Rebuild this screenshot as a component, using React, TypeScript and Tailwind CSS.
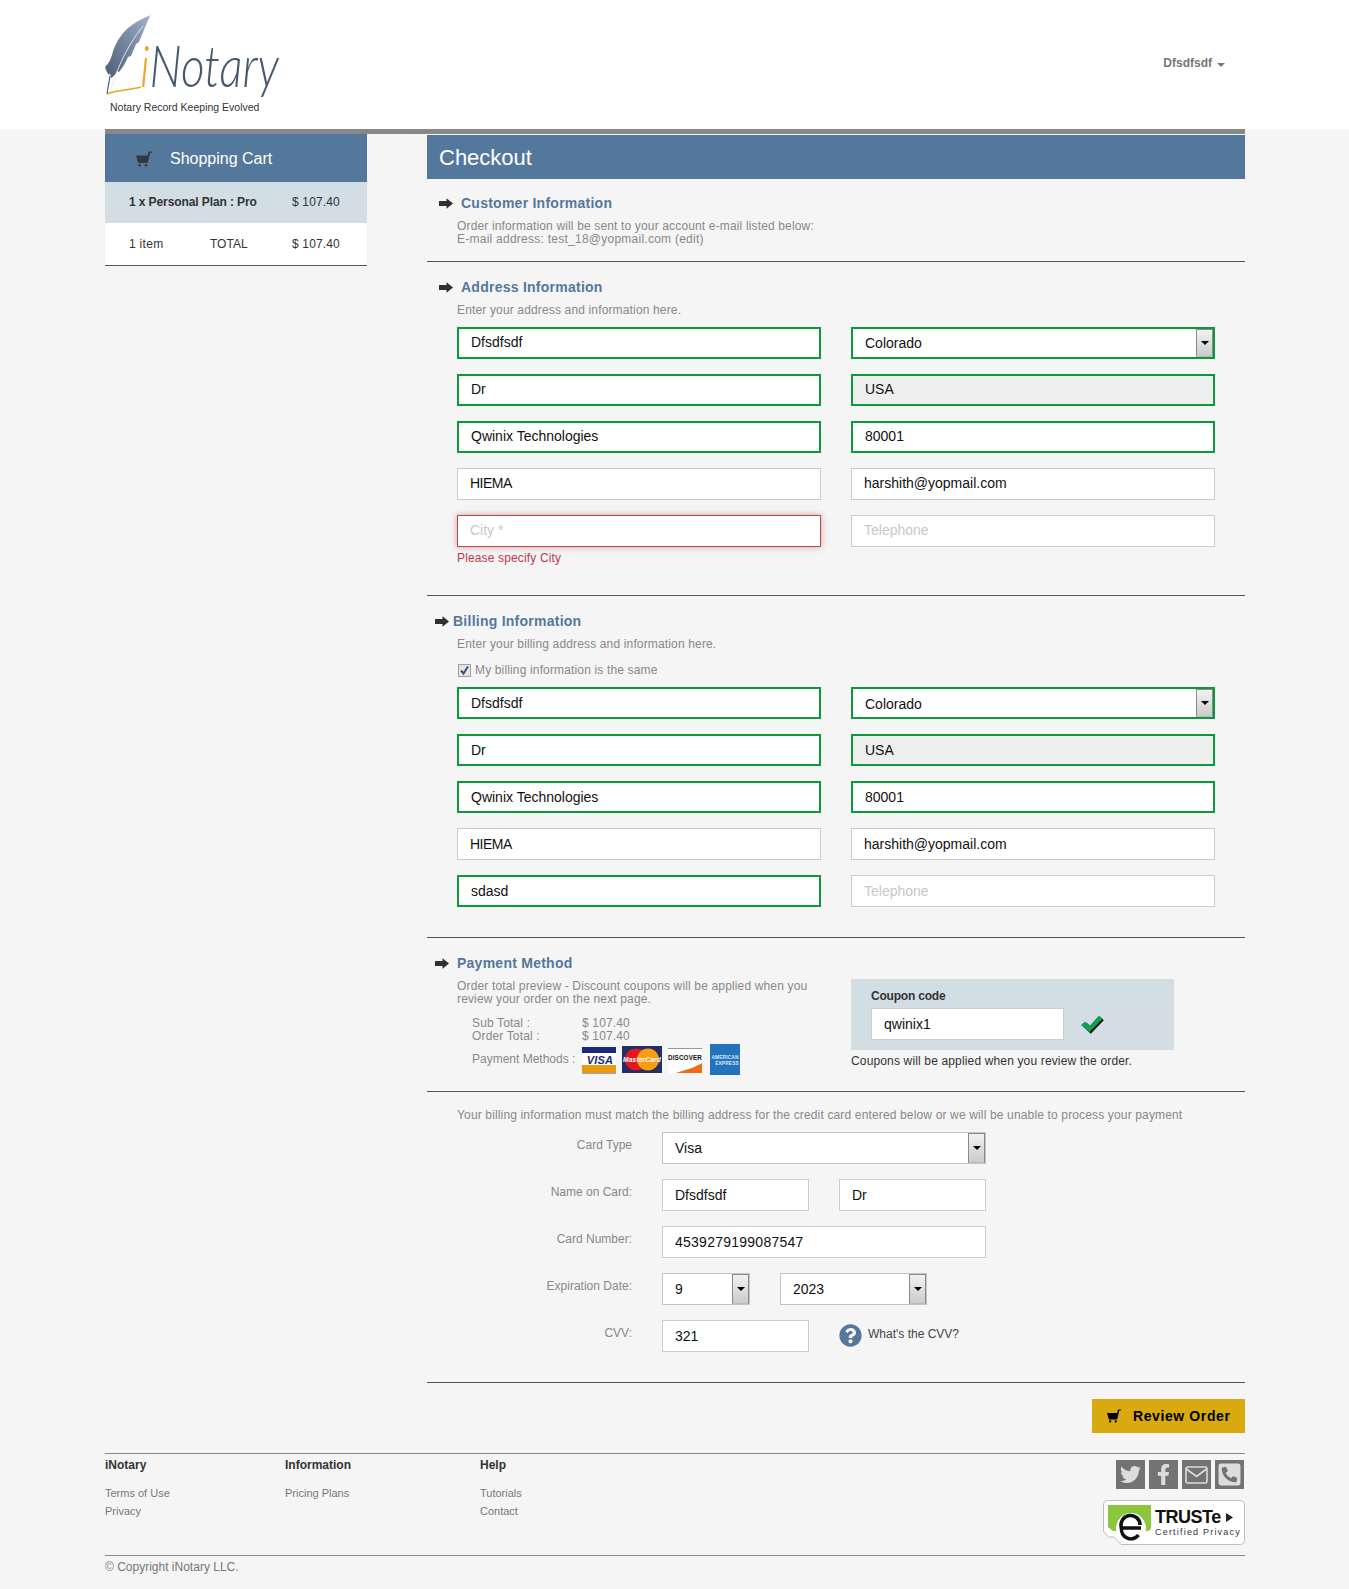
import React from 'react';
import { FaTwitter, FaFacebookF, FaPhoneSquareAlt, FaQuestionCircle } from 'react-icons/fa';

type FieldState = 'ok' | 'plain' | 'error';

const muted = 'text-xs leading-[13px] tracking-[0.15px] text-[#888]';

const borders: Record<FieldState, string> = {
  ok: 'border-2 border-[#0a9a3c] pl-3',
  plain: 'border border-[#cccccc] pl-3',
  error: 'border border-[#b94a48] pl-3 shadow-[0_0_6px_rgba(185,74,72,0.5)]',
};

const Field = ({ value, placeholder, state = 'plain', disabled, width = 'w-full', pad = 'pb-0' }: { value?: string; placeholder?: string; state?: FieldState; disabled?: boolean; width?: string; pad?: string }) => (
  <input
    readOnly
    value={value ?? ''}
    placeholder={placeholder}
    className={`${width} ${pad} h-8 text-sm leading-none text-[#111] placeholder:text-[#c8c8c8] outline-none ${disabled ? 'bg-[#eeeeee]' : 'bg-white'} ${borders[state]}`}
  />
);

const SelectField = ({ value, state = 'plain', width = 'w-full', pad = '' }: { value: string; state?: FieldState; width?: string; pad?: string }) => (
  <div className={`${width} h-8 flex items-stretch bg-white ${state === 'ok' ? 'border-2 border-[#0a9a3c]' : 'border border-[#c4c4c4]'}`}>
    <span className={`flex-1 self-center pl-3 text-sm text-[#111] ${pad}`}>{value}</span>
    <span className="w-[17px] flex items-center justify-center border border-[#8a8a8a] border-b-[#bbbbbb] bg-gradient-to-b from-[#f2f2f2] to-[#cbcbcb]">
      <span className="w-0 h-0 border-x-[4px] border-x-transparent border-t-[4px] border-t-black" />
    </span>
  </div>
);

const Arrow = () => (
  <svg width="14" height="11" viewBox="0 0 14 11" className="shrink-0">
    <path d="M0 3h7.500V0.200L14 5.500l-6.500 5.300V8H0z" fill="#33302f" />
  </svg>
);

const Cart = ({ color = '#33393f', size = 16 }: { color?: string; size?: number }) => (
  <svg width={size} height={size} viewBox="0 0 16 16" className="shrink-0">
    <path d="M0 4.500h11.600l.9-3.400c.1-.4.3-.6.7-.6H16v1.200h-1.900L11.600 12H2.200z" fill={color} />
    <circle cx="3.600" cy="14.200" r="1.300" fill={color} />
    <circle cx="10" cy="14.200" r="1.300" fill={color} />
  </svg>
);

const Heading = ({ children, gap = 'gap-[8px]', pad = 'pl-3' }: { children: React.ReactNode; gap?: string; pad?: string }) => (
  <div className={`flex items-center h-5 ${gap} ${pad}`}>
    <Arrow />
    <h3 className="text-sm font-bold tracking-[0.25px] text-[#54789b]">{children}</h3>
  </div>
);

const Divider = () => <div className="h-px bg-[#555555]" />;

const Visa = () => (
  <svg width="34" height="27" viewBox="0 0 34 27" className="mt-[3px]">
    <rect width="34" height="27" fill="#fff" />
    <rect width="34" height="6" fill="#1a2a78" />
    <rect y="18" width="34" height="8" fill="#e79a0a" />
    <rect y="26" width="34" height="1" fill="#9aa4c0" />
    <text x="18" y="16.500" fontSize="11" fontWeight="700" fontStyle="italic" textAnchor="middle" fill="#1a2a78" fontFamily="Liberation Sans, sans-serif">VISA</text>
  </svg>
);

const MasterCard = () => (
  <svg width="40" height="27" viewBox="0 0 40 27" className="ml-[6px] mt-[2px]">
    <rect width="40" height="27" fill="#232f66" />
    <circle cx="14" cy="13.500" r="11" fill="#e2171f" />
    <circle cx="26" cy="13.500" r="11" fill="#f59e12" />
    <text x="20" y="16" fontSize="6.600" fontWeight="700" fontStyle="italic" textAnchor="middle" fill="#fff" fontFamily="Liberation Sans, sans-serif">MasterCard</text>
  </svg>
);

const Discover = () => (
  <svg width="34" height="25" viewBox="0 0 34 25" className="ml-[6px] mt-[4px]">
    <rect width="34" height="25" fill="#fff" />
    <rect width="34" height="1" fill="#999" />
    <path d="M8 25C18 22 28 19 34 15V25z" fill="#f26a12" />
    <text x="17" y="11.500" fontSize="6.300" fontWeight="700" textAnchor="middle" fill="#111" fontFamily="Liberation Sans, sans-serif">DISCOVER</text>
  </svg>
);

const Amex = () => (
  <svg width="30" height="31" viewBox="0 0 30 31" className="ml-2">
    <rect width="30" height="31" fill="#2372bb" />
    <text x="15" y="14.500" fontSize="4.800" fontWeight="700" textAnchor="middle" fill="#dceaf6" fontFamily="Liberation Sans, sans-serif">AMERICAN</text>
    <text x="17" y="21" fontSize="4.800" fontWeight="700" textAnchor="middle" fill="#dceaf6" fontFamily="Liberation Sans, sans-serif">EXPRESS</text>
  </svg>
);

const Logo = () => (
  <div className="relative w-[190px] h-[129px]">
    <svg width="52" height="84" viewBox="0 0 52 84" className="absolute left-0 top-[14px]">
      <defs>
        <linearGradient id="quill" x1="0" y1="1" x2="1" y2="0">
          <stop offset="0" stopColor="#4d5d73" />
          <stop offset="0.6" stopColor="#7d8ea8" />
          <stop offset="1" stopColor="#a6b3c8" />
        </linearGradient>
      </defs>
      <path d="M46 1C38 4 28 9 21 16 13 24 9 33 7 41 5 47 3 50 0 53c1 3 2 6 4 8l1-2 1 5c2-1 5-4 6-7l2 1c4-5 7-10 9-15l3-1c2-5 4-9 5-12l3-2c3-7 8-20 12-28z" fill="url(#quill)" />
      <path d="M5 80C9 62 20 34 38 12" stroke="#e6ebf2" strokeWidth="0.900" fill="none" />
      <path d="M5 62L2 80" stroke="#4d5d73" strokeWidth="1.200" fill="none" />
      <path d="M2 80C12 76 26 76 36 73" stroke="#e7a824" strokeWidth="1.500" fill="none" />
    </svg>
    <span className="absolute left-[35px] top-[47px] origin-bottom scale-y-125 font-['Lato',sans-serif] font-light italic text-[46px] leading-[50px] text-[#47586d] whitespace-nowrap">
      <span className="text-[#e7a824]">i</span>Notary
    </span>
    <span className="absolute left-[5px] top-[101px] text-[10.5px] leading-[13px] text-[#333] whitespace-nowrap">Notary Record Keeping Evolved</span>
  </div>
);

const Truste = () => (
  <svg width="142" height="45" viewBox="0 0 142 45" className="block">
    <path d="M5 .5H137a4.500 4.500 0 0 1 4.500 4.500V40a4.500 4.500 0 0 1-4.500 4.500H18L11 37H5.500L.5 31V5A4.500 4.500 0 0 1 5 .5z" fill="#fff" stroke="#bdbdbd" />
    <path d="M5 5H48V27C48 30 46 31 44 31H10L5 27z" fill="#8cc63f" />
    <circle cx="28" cy="28" r="15" fill="#fff" />
    <path d="M38 28H18.500a9.500 9.500 0 1 1 18.500-3" stroke="#111" strokeWidth="3.600" fill="none" />
    <path d="M18.500 28a9.500 9.500 0 0 0 17 7" stroke="#111" strokeWidth="3.600" fill="none" />
    <text x="52" y="23" fontSize="18" fontWeight="700" fill="#111" fontFamily="Liberation Sans, sans-serif" letterSpacing="-0.500">TRUSTe</text>
    <path d="M123 13l7 4.500-7 4.500z" fill="#222" />
    <text x="52" y="35" fontSize="9" fill="#333" fontFamily="Liberation Sans, sans-serif" letterSpacing="1.200">Certified Privacy</text>
  </svg>
);

const FormRow = ({ label, children }: { label: string; children: React.ReactNode }) => (
  <div className="flex items-start">
    <label className="w-[205px] pt-[7px] text-right text-xs leading-[13px] text-[#888]">{label}</label>
    <div className="ml-[30px] flex items-start">{children}</div>
  </div>
);

const addressFields = (city: React.ReactNode, pad: string, selectPad: string) => (
  <div className="grid grid-cols-[364px_364px] gap-x-[30px] gap-y-[15px]">
    <Field value="Dfsdfsdf" state="ok" pad={pad} />
    <SelectField value="Colorado" state="ok" pad={selectPad} />
    <Field value="Dr" state="ok" pad={pad} />
    <Field value="USA" state="ok" disabled pad={pad} />
    <Field value="Qwinix Technologies" state="ok" pad={pad} />
    <Field value="80001" state="ok" pad={pad} />
    <Field value="HIEMA" width="w-full tracking-[-0.5px]" pad={pad} />
    <Field value="harshith@yopmail.com" pad={pad} />
    {city}
    <Field placeholder="Telephone" pad={pad} />
  </div>
);

const footerCols = [
  { title: 'iNotary', links: ['Terms of Use', 'Privacy'], width: 'w-[180px]' },
  { title: 'Information', links: ['Pricing Plans'], width: 'w-[195px]' },
  { title: 'Help', links: ['Tutorials', 'Contact'], width: 'w-[100px]' },
];

export default function App() {
  return (
    <div className="min-h-[1589px] bg-[#f5f5f5] font-['Liberation_Sans',Arial,sans-serif]">
      <header className="bg-white h-[129px]">
        <div className="w-[1140px] ml-[105px] flex justify-between">
          <Logo />
          <div className="pr-5 pt-[57px] flex items-start gap-[5px] text-xs leading-[13px] font-bold text-[#777]">
            Dfsdfsdf
            <span className="mt-[6px] w-0 h-0 border-x-[4px] border-x-transparent border-t-[4px] border-t-[#777]" />
          </div>
        </div>
      </header>

      <div className="w-[1140px] ml-[105px]">
        <div className="h-[5px] bg-[#888888]" />
        <div className="flex justify-between items-start">
          {/* Cart */}
          <aside className="w-[262px]">
            <div className="h-[48px] pt-px bg-[#54789b] flex items-center pl-[31px] gap-[18px] text-white text-base">
              <Cart />
              Shopping Cart
            </div>
            <div className="h-[41px] pb-[2px] bg-[#d3dde4] flex items-center pl-6 text-xs text-[#333]">
              <span className="w-[163px] font-bold tracking-[-0.1px]">1 x Personal Plan : Pro</span>
              <span className="tracking-[0.15px]">$ 107.40</span>
            </div>
            <div className="h-[43px] bg-white border-b border-b-[#555] flex items-center pl-6 text-xs text-[#333]">
              <span className="w-[81px] tracking-[0.3px]">1 item</span>
              <span className="w-[82px]">TOTAL</span>
              <span className="tracking-[0.15px]">$ 107.40</span>
            </div>
          </aside>

          {/* Checkout */}
          <main className="w-[818px] pt-px">
            <h1 className="h-[44px] pt-px bg-[#54789b] flex items-center pl-3 text-[22px] text-white">Checkout</h1>

            <section className="mt-[14px]">
              <Heading>Customer Information</Heading>
              <p className={`mt-[7px] pl-[30px] ${muted}`}>
                Order information will be sent to your account e-mail listed below:
                <br />
                <span className="tracking-[0.25px]">E-mail address: test_18@yopmail.com (edit)</span>
              </p>
            </section>
            <div className="mt-[15px]"><Divider /></div>

            <section className="mt-[15px]">
              <Heading>Address Information</Heading>
              <p className={`mt-[7px] pl-[30px] ${muted}`}>Enter your address and information here.</p>
              <div className="mt-[10px] pl-[30px]">
                {addressFields(<Field placeholder="City *" state="error" pad="pb-[2px]" />, 'pb-[2px]', '')}
                <p className="mt-[5px] text-xs leading-[13px] tracking-[0.15px] text-[#c0394b]">Please specify City</p>
              </div>
            </section>
            <div className="mt-[30px]"><Divider /></div>

            <section className="mt-[15px]">
              <Heading gap="gap-[4px]" pad="pl-[8px]">Billing Information</Heading>
              <p className={`mt-[7px] pl-[30px] ${muted}`}>Enter your billing address and information here.</p>
              <label className={`mt-[13px] pl-[31px] flex items-center gap-[4px] h-[13px] ${muted}`}>
                <span className="w-[13px] h-[13px] border border-[#a0a0a0] bg-[#e4e4e4] flex items-center justify-center">
                  <svg width="11" height="11" viewBox="0 0 11 11"><path d="M2 5.500l2.500 3L9 1.500" stroke="#36518f" strokeWidth="2" fill="none" /></svg>
                </span>
                My billing information is the same
              </label>
              <div className="mt-[10px] pl-[30px]">
                {addressFields(<Field value="sdasd" state="ok" />, 'pb-0', 'pt-[2px]')}
              </div>
            </section>
            <div className="mt-[30px]"><Divider /></div>

            <section className="mt-[15px]">
              <Heading gap="gap-[8px]" pad="pl-[8px]">Payment Method</Heading>
              <div className="mt-[6px] pl-[30px] flex items-start">
                <div className={`w-[394px] pt-px ${muted}`}>
                  <p>
                    Order total preview - Discount coupons will be applied when you
                    <br />
                    review your order on the next page.
                  </p>
                  <div className="mt-[11px] pl-[15px]">
                    <div className="flex"><span className="w-[110px]">Sub Total :</span><span>$ 107.40</span></div>
                    <div className="flex"><span className="w-[110px]">Order Total :</span><span>$ 107.40</span></div>
                    <div className="mt-[1px] flex items-start">
                      <span className="w-[110px] mt-[9px] whitespace-nowrap tracking-normal">Payment Methods :</span>
                      <Visa />
                      <MasterCard />
                      <Discover />
                      <Amex />
                    </div>
                  </div>
                </div>
                <div className="w-[323px]">
                  <div className="h-[71px] bg-[#d3dde4] pt-[11px] pl-5">
                    <div className="text-xs leading-[13px] font-bold tracking-[-0.2px] text-[#333]">Coupon code</div>
                    <div className="mt-[5px] flex items-center gap-[17px]">
                      <Field value="qwinix1" width="w-[193px]" />
                      <svg width="23" height="19" viewBox="0 0 23 19">
                        <path d="M1 10.500l4-3.500 4 4L18.500 1 22 4.500 9 18z" fill="#111" transform="translate(0.800 0.800)" />
                        <path d="M0 10l4-3.500 4.500 4.500L18 .5l3.500 3.500L8.500 17z" fill="#0ea24f" />
                      </svg>
                    </div>
                  </div>
                  <p className="mt-[5px] text-xs leading-[13px] tracking-[0.15px] text-[#333]">Coupons will be applied when you review the order.</p>
                </div>
              </div>
            </section>
            <div className="mt-4"><Divider /></div>

            <section className="mt-[17px]">
              <p className={`pl-[30px] ${muted}`}>Your billing information must match the billing address for the credit card entered below or we will be unable to process your payment</p>
              <div className="mt-[10px] flex flex-col gap-[15px]">
                <FormRow label="Card Type"><SelectField value="Visa" width="w-[324px]" /></FormRow>
                <FormRow label="Name on Card:">
                  <Field value="Dfsdfsdf" width="w-[147px]" />
                  <div className="ml-[30px]"><Field value="Dr" width="w-[147px]" /></div>
                </FormRow>
                <FormRow label="Card Number:"><Field value="4539279199087547" width="w-[324px] tracking-[0.25px]" /></FormRow>
                <FormRow label="Expiration Date:">
                  <SelectField value="9" width="w-[88px]" />
                  <div className="ml-[30px]"><SelectField value="2023" width="w-[147px]" /></div>
                </FormRow>
                <FormRow label="CVV:">
                  <Field value="321" width="w-[147px]" />
                  <div className="ml-[30px] mt-[4px] flex items-start gap-[6px] text-xs leading-[13px] text-[#444]">
                    <FaQuestionCircle className="text-[23px] text-[#54789b]" />
                    <span className="mt-[4px]">What's the CVV?</span>
                  </div>
                </FormRow>
              </div>
            </section>
            <div className="mt-[30px]"><Divider /></div>

            <div className="mt-4 flex justify-end">
              <button className="w-[153px] h-[34px] bg-[#d9aa0f] flex items-center pl-[15px] gap-[12px] text-sm font-bold tracking-[0.6px] text-black">
                <Cart color="#000" size={14} />
                Review Order
              </button>
            </div>
          </main>
        </div>

        <footer className="mt-5 border-t border-t-[#888]">
          <div className="h-[101px] flex justify-between">
            <div className="flex pt-[5px]">
              {footerCols.map((col) => (
                <div key={col.title} className={col.width}>
                  <div className="text-xs leading-[13px] font-bold text-[#333]">{col.title}</div>
                  <ul className="mt-[15px] flex flex-col gap-[5px] text-[11px] leading-[13px] text-[#777]">
                    {col.links.map((link) => <li key={link}>{link}</li>)}
                  </ul>
                </div>
              ))}
            </div>
            <div className="flex flex-col items-end pt-[6px]">
              <div className="flex gap-[4px] mr-px">
                <span className="w-[29px] h-[29px] bg-[#737373] flex items-center justify-center text-[21px] text-[#dddddd]"><FaTwitter /></span>
                <span className="w-[29px] h-[29px] bg-[#737373] flex items-center justify-center text-[21px] text-[#dddddd]"><FaFacebookF /></span>
                <span className="w-[29px] h-[29px] bg-[#737373] flex items-center justify-center">
                  <svg width="23" height="18" viewBox="0 0 23 18" fill="none" stroke="#dddddd" strokeWidth="1.600">
                    <rect x="1" y="1" width="21" height="16" rx="2" />
                    <path d="M1.500 3l10 7.500 10-7.500" />
                  </svg>
                </span>
                <span className="w-[29px] h-[29px] bg-[#737373] flex items-center justify-center text-[25px] text-[#dddddd]"><FaPhoneSquareAlt /></span>
              </div>
              <div className="mt-[11px]"><Truste /></div>
            </div>
          </div>
          <div className="border-t border-t-[#888] pt-[5px] text-xs leading-[13px] text-[#777]">© Copyright iNotary LLC.</div>
        </footer>
      </div>
    </div>
  );
}
